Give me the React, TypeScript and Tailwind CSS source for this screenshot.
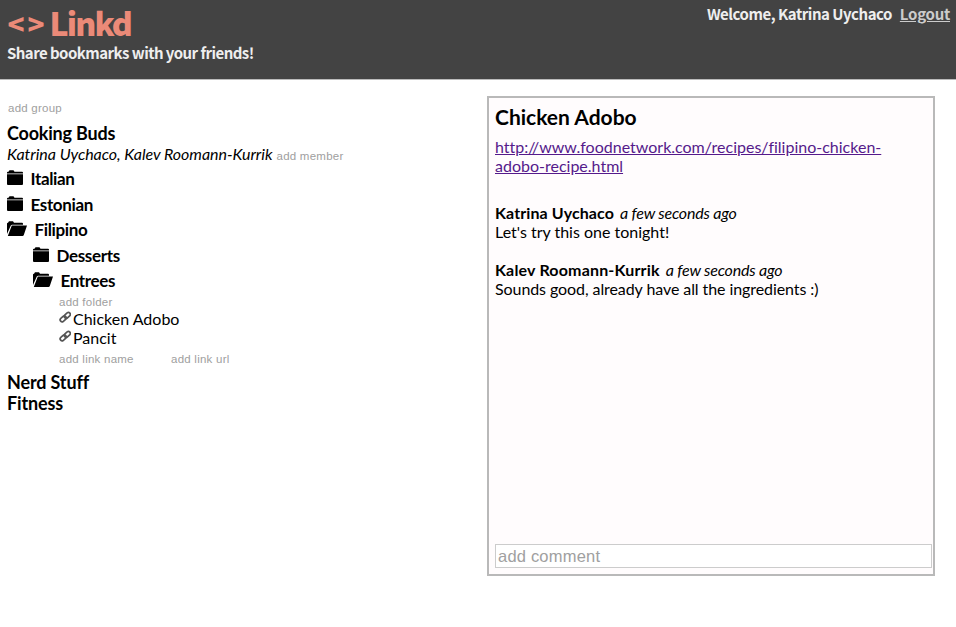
import React from "react";

const Closed = ({ className }: { className: string }) => (
  <svg className={className} width="16" height="15" viewBox="0 0 16 15" fill="#000">
    <path d="M0 3.500V2.500Q0 1.800 1 1.800H1.500L2.500.2H6.500L7.500 1.800H15Q16 1.800 16 2.800V3.500ZM0 4.300H16V14Q16 15 15 15H1Q0 15 0 14Z" />
  </svg>
);
const Open = ({ className }: { className: string }) => (
  <svg className={className} width="20" height="15" viewBox="0 0 20 15" fill="#000">
    <path d="M0 13V2.500Q0 1.800 1 1.800L2 .2H6L7 1.800H15Q16 1.800 16 2.800V3.800H5.200Q4.200 3.800 3.800 4.600ZM4.800 4.600H20L16.800 14Q16.500 15 15.500 15H.8Z" />
  </svg>
);
const Link = () => (
  <svg className="mt-[2px] mr-[2px] shrink-0" width="12" height="14" viewBox="0 0 12 14" fill="none" stroke="#555" strokeWidth="1.700">
    <rect x="-3.400" y="-1.900" width="6.800" height="3.800" rx="1.900" transform="translate(8.300 4.400) rotate(-42)" />
    <rect x="-3.400" y="-1.900" width="6.800" height="3.800" rx="1.900" transform="translate(4.200 7.900) rotate(-42)" />
  </svg>
);

function Folder({ name, open = false, nested = false }: { name: string; open?: boolean; nested?: boolean }) {
  return (
    <div className={`flex h-[25.5px] items-start text-[17px] leading-[22px] font-bold tracking-[-0.35px] ${nested ? "pl-[26px]" : ""}`}>
      {open ? <Open className="mt-[2px] mr-[7.5px]" /> : <Closed className="mt-[2px] mr-[7.5px]" />}
      <span>{name}</span>
    </div>
  );
}

const placeholder = "font-['Liberation_Sans',sans-serif] text-[11.5px] tracking-[0.24px] text-[#a0a0a0]";

export default function App() {
  return (
    <div className="h-[627px] w-[956px] overflow-hidden bg-white font-['Lato',sans-serif] text-[16px] leading-[19px] text-black">
      <header className="flex h-[80px] justify-between border-b border-[#bbb] bg-[#434343] pr-[6px] pl-[7px] font-['Noto_Sans_CJK_SC',sans-serif] font-bold text-[#eee]">
        <div>
          <h1 className="mt-[2px] flex h-[41px] text-[32px] leading-[40px] font-black tracking-[-1.85px] text-[#eb8a78]">
            <span className="w-[42.5px] pt-px pl-[0.5px] text-[28px] tracking-[3px]">&lt;&gt;</span>
            <span>Linkd</span>
          </h1>
          <p className="text-[15px] leading-[20px] tracking-[-0.55px]">Share bookmarks with your friends!</p>
        </div>
        <div className="mt-[4px] text-[15px] leading-[20px] tracking-[-0.48px]">
          Welcome, Katrina Uychaco <span className="ml-[5px] tracking-[-0.27px] text-[#ccc] underline">Logout</span>
        </div>
      </header>
      <main className="flex">
        <section className="w-[487px] pt-[21px] pl-[7px]">
          <div className={`h-[21px] pl-px leading-[14px] ${placeholder}`}>add group</div>
          <h2 className="h-[22px] text-[18px] leading-[22px] font-bold tracking-[-0.2px]">Cooking Buds</h2>
          <div className="h-[24px]"><i className="tracking-[-0.03px]">Katrina Uychaco, Kalev Roomann-Kurrik</i><span className={`ml-[4px] ${placeholder}`}>add member</span></div>
          <Folder name="Italian" /><Folder name="Estonian" /><Folder name="Filipino" open />
          <Folder name="Desserts" nested /><Folder name="Entrees" open nested />
          <div className="h-[76.5px] pl-[52px]">
            <div className={`h-[13.5px] leading-[13px] ${placeholder}`}>add folder</div>
            <div className="flex h-[19px]"><Link />Chicken Adobo</div>
            <div className="flex h-[19px]"><Link />Pancit</div>
            <div className={`flex leading-[25px] ${placeholder}`}><span className="w-[112px]">add link name</span><span>add link url</span></div>
          </div>
          <h2 className="text-[18px] leading-[21px] font-bold tracking-[-0.15px]">Nerd Stuff</h2>
          <h2 className="text-[18px] leading-[21px] font-bold tracking-[-0.15px]">Fitness</h2>
        </section>
        <article className="mt-[16px] flex h-[480px] w-[448px] flex-col border-2 border-[#b9b9b9] bg-[#fffcfd] pt-[6px] pr-px pb-[6px] pl-[6px]">
          <h2 className="h-[33px] text-[21px] leading-[25px] font-bold">Chicken Adobo</h2>
          <a className="w-[400px] text-[#551a8b] underline [font-variant-ligatures:none]">http://www.foodnetwork.com/recipes/filipino-chicken-<br />adobo-recipe.html</a>
          <div className="mt-[28px]"><b className="tracking-[0.1px]">Katrina Uychaco</b><i className="ml-[6px] tracking-[-0.2px]">a few seconds ago</i><p>Let's try this one tonight!</p></div>
          <div className="mt-[19px]"><b className="tracking-[0.18px]">Kalev Roomann-Kurrik</b><i className="ml-[6px] tracking-[-0.2px]">a few seconds ago</i><p className="tracking-[-0.08px]">Sounds good, already have all the ingredients :)</p></div>
          <div className="mt-auto h-[24px] border border-[#ccc] bg-white pl-[2px] font-['Liberation_Sans',sans-serif] text-[16.5px] leading-[23px] tracking-[0.2px] text-[#a0a0a0]">add comment</div>
        </article>
      </main>
    </div>
  );
}
